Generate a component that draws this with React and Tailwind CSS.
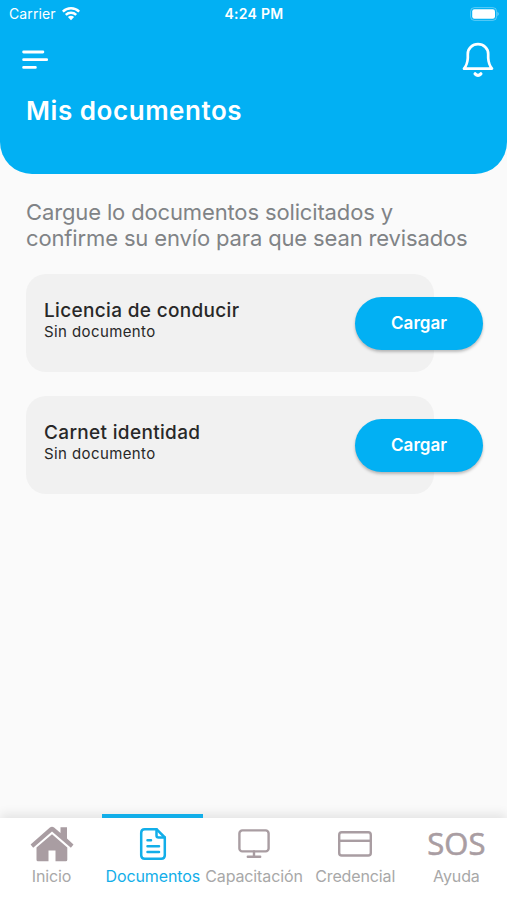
import { useState } from 'react';

const documents = [
    { id: 'licencia', title: 'Licencia de conducir', status: 'Sin documento' },
    { id: 'carnet', title: 'Carnet identidad', status: 'Sin documento' }
];

const HomeIcon = () => (
    <svg width="44" height="36" viewBox="0 0 44 36" fill="currentColor">
        <path d="M30.5 1.2h6.5v11.300l6.500 6-2.600 3.200L22 5.500 3.200 21.700.6 18.500 19.900 1.600q2.100-1.600 4.200 0l6.400 5.400z" />
        <path d="M22 8.300 37.300 21.500v12.300q0 1.500-1.500 1.500H25.500V24.500h-7v10.800H8q-1.500 0-1.500-1.500V21.500z" />
    </svg>
);

const DocumentIcon = () => (
    <svg width="28" height="34" viewBox="0 0 28 34" fill="none" stroke="currentColor" strokeWidth="2.5" strokeLinecap="round" strokeLinejoin="round">
        <path d="M17.500 2.200H5.700q-3.500 0-3.500 3.500v22.600q0 3.500 3.500 3.500h16.600q3.500 0 3.500-3.500V10.500z" />
        <path d="M17.500 2.200v6.300q0 2 2 2h6.300" />
        <path d="M8.500 13.300H12M8.500 19.200h11.500M8.500 25h11.500" />
    </svg>
);

const MonitorIcon = () => (
    <svg width="32" height="30" viewBox="0 0 32 30" fill="none" stroke="currentColor" strokeWidth="2.4" strokeLinecap="round" strokeLinejoin="round">
        <rect x="1.4" y="1.4" width="29.2" height="21" rx="3" />
        <path d="M16 22.5v5.200M9.800 27.700h12.400" />
    </svg>
);

const CardIcon = () => (
    <svg width="34" height="26" viewBox="0 0 34 26" fill="none" stroke="currentColor" strokeWidth="2.4" strokeLinejoin="round">
        <rect x="1.2" y="1.3" width="31.6" height="23.2" rx="2.6" />
        <path d="M1.2 9.800h31.600" />
    </svg>
);

const SosIcon = () => (
    <span className="-mt-[2px] font-['Open_Sans',sans-serif] text-[31px] leading-8 font-normal [-webkit-text-stroke:0.6px_currentColor]">SOS</span>
);

const tabs = [
    { id: 'inicio', label: 'Inicio', icon: HomeIcon },
    { id: 'documentos', label: 'Documentos', icon: DocumentIcon },
    { id: 'capacitacion', label: 'Capacitación', icon: MonitorIcon },
    { id: 'credencial', label: 'Credencial', icon: CardIcon },
    { id: 'ayuda', label: 'Ayuda', icon: SosIcon }
];

const StatusBar = () => (
    <div className="grid h-[27px] grid-cols-3 items-center pr-[8px] pl-[9px] text-[14px]">
        <div className="flex items-center gap-[6px]">
            <span className="tracking-[0.1px]">Carrier</span>
            <svg width="18" height="15" viewBox="0 0 18 15" fill="none" stroke="currentColor" strokeWidth="2.5">
                <path d="M.8 5.600a11.700 11.700 0 0 1 16.400 0M3.800 8.800a7.500 7.500 0 0 1 10.400 0" />
                <path d="M9 14.200 5.900 11.100a4.500 4.500 0 0 1 6.200 0z" fill="currentColor" stroke="none" />
            </svg>
        </div>
        <span className="text-center font-semibold tracking-[0.3px]">4:24 PM</span>
        <div className="flex justify-end">
            <svg width="29" height="14" viewBox="0 0 29 14" fill="none">
                <rect x=".6" y=".6" width="26" height="12.8" rx="3.8" stroke="#fff" strokeOpacity=".35" />
                <rect x="2.2" y="2.2" width="22.8" height="9.6" rx="2.2" fill="#fff" />
                <path d="M27.500 4.800q2.400 2.200 0 4.400z" fill="#fff" fillOpacity=".5" />
            </svg>
        </div>
    </div>
);

const Header = () => (
    <header className="h-[174px] shrink-0 rounded-b-[32px] bg-[#02b0f3] text-white">
        <StatusBar />
        <div className="flex h-[65px] items-center justify-between pr-[13px] pl-[22px]">
            <button aria-label="Menú">
                <svg width="27" height="20" viewBox="0 0 27 20" stroke="currentColor" strokeWidth="2.8" strokeLinecap="round">
                    <path d="M1.600 2h19.300M1.600 9.700h23.100M1.600 17.400h11.800" />
                </svg>
            </button>
            <button aria-label="Notificaciones">
                <svg width="32" height="36" viewBox="0 0 32 36" fill="none" stroke="currentColor" strokeWidth="2.7" strokeLinecap="round" strokeLinejoin="round">
                    <path d="M2 26.600h28q-3.400-4-3.800-10.600v-4a10.200 9.800 0 0 0-20.400 0v4q-.4 6.600-3.800 10.600z" />
                    <path d="M13.100 31.800q2.900 3 5.800 0" strokeWidth="3.2" />
                </svg>
            </button>
        </div>
        <h1 className="pl-[26px] text-[26px] leading-[37px] font-semibold tracking-[0.55px]">Mis documentos</h1>
    </header>
);

const DocumentCard = ({ title, status }) => (
    <article className="flex h-[98px] items-center">
        <div className="h-full w-[408px] shrink-0 rounded-[20px] bg-[#f1f1f1] pt-[25px] pl-[18px] text-[#282828]">
            <h2 className="text-[19px] leading-[23px] font-medium tracking-[0.33px]">{title}</h2>
            <p className="text-[15px] leading-[19px] tracking-[0.4px]">{status}</p>
        </div>
        <button className="-ml-[79px] h-[53px] w-[128px] shrink-0 rounded-full bg-[#02b0f3] pt-[1px] text-[17px] font-semibold text-white shadow-[0_2px_3px_rgba(0,0,0,0.25)]">
            Cargar
        </button>
    </article>
);

const TabBar = ({ active, onChange }) => (
    <nav className="grid h-[82px] shrink-0 grid-cols-5 bg-white pl-[1px] shadow-[0_-4px_10px_rgba(0,0,0,0.09)]">
        {tabs.map((tab) => (
            <button
                key={tab.id}
                onClick={() => onChange(tab.id)}
                className={`relative flex flex-col items-center pt-[9px] ${active === tab.id ? 'text-[#12aee9]' : 'text-[#a99da2]'}`}
            >
                {active === tab.id && <span className="absolute -top-[4px] left-0 h-[4px] w-full bg-[#12aee9]" />}
                <span className="flex h-[34px] items-center justify-center">
                    <tab.icon />
                </span>
                <span className={`mt-[5px] text-[16px] leading-5 tracking-[-0.12px] whitespace-nowrap ${active === tab.id ? '' : 'text-[#a8a8a8]'}`}>
                    {tab.label}
                </span>
            </button>
        ))}
    </nav>
);

const App = () => {
    const [active, setActive] = useState('documentos');

    return (
        <div className="flex h-screen w-full flex-col overflow-hidden bg-[#fafafa] font-['Inter','Liberation_Sans',sans-serif]">
            <Header />
            <main className="flex-1 pt-[25px] pl-[26px]">
                <p className="text-[22px] leading-[26px] tracking-[-0.14px] text-[#808386]">
                    Cargue lo documentos solicitados y<br />
                    confirme su envío para que sean revisados
                </p>
                <div className="mt-[23px] flex flex-col gap-6">
                    {documents.map((doc) => (
                        <DocumentCard key={doc.id} title={doc.title} status={doc.status} />
                    ))}
                </div>
            </main>
            <TabBar active={active} onChange={setActive} />
        </div>
    );
};

export default App;
